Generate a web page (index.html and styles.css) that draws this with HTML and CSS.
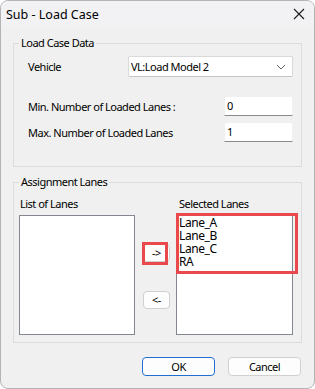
FILE: index.html
```html
<!DOCTYPE html>
<html lang="en">
<head>
  <meta charset="UTF-8">
  <meta name="viewport" content="width=device-width, initial-scale=1.0">
  <title>Sub - Load Case</title>
  <link rel="stylesheet" href="styles.css">
</head>
<body>
  <div class="window">
    <div class="titlebar">
      <span class="title">Sub - Load Case</span>
      <svg class="close" width="12" height="12" viewBox="0 0 12 12">
        <path d="M1 1 L11 11 M11 1 L1 11" stroke="#1b1b1b" stroke-width="1.1" fill="none"/>
      </svg>
    </div>

    <div class="content">
      <fieldset class="group">
        <legend>Load Case Data</legend>
        <div class="group-body body-data">
          <div class="row row-vehicle">
            <label>Vehicle</label>
            <div class="select">
              <span>VL:Load Model 2</span>
              <svg width="10" height="6" viewBox="0 0 10 6">
                <path d="M1 1 L5 5 L9 1" stroke="#5f5f5f" stroke-width="1" fill="none"/>
              </svg>
            </div>
          </div>
          <div class="row row-min">
            <label>Min. Number of Loaded Lanes :</label>
            <div class="field">0</div>
          </div>
          <div class="row row-max">
            <label>Max. Number of Loaded Lanes</label>
            <div class="field">1</div>
          </div>
        </div>
      </fieldset>

      <fieldset class="group group-lanes">
        <legend>Assignment Lanes</legend>
        <div class="group-body body-lanes">
          <div class="col col-left">
            <div class="caption">List of Lanes</div>
            <div class="listbox"></div>
          </div>
          <div class="mover">
            <button class="btn small">-&gt;</button>
            <button class="btn small">&lt;-</button>
            <span class="mark mark-btn"></span>
          </div>
          <div class="col col-right">
            <div class="caption">Selected Lanes</div>
            <div class="listbox">
              <ul class="items">
                <li>Lane_A</li>
                <li>Lane_B</li>
                <li>Lane_C</li>
                <li>RA</li>
              </ul>
              <span class="mark mark-list"></span>
            </div>
          </div>
        </div>
      </fieldset>

      <div class="actions">
        <button class="btn wide ok">OK</button>
        <button class="btn wide">Cancel</button>
      </div>
    </div>
  </div>
</body>
</html>
```

FILE: styles.css
```css
body {
  margin: 0;
  background: #ffffff;
  font-family: "Noto Sans", "Open Sans", sans-serif;
  font-size: 11px;
  letter-spacing: -0.5px;
  color: #000;
}
.window {
  width: 315px;
  height: 389px;
  box-sizing: border-box;
  border: 1px solid #b4b4b4;
  border-radius: 8px;
  overflow: hidden;
  background: #f0f0f0;
  display: flex;
  flex-direction: column;
}
.titlebar {
  height: 26px;
  background: #f2f1f4;
  display: flex;
  align-items: center;
  justify-content: space-between;
  padding: 0 9px 0 5px;
  font-size: 12.5px;
  letter-spacing: 0;
}
.close {
  display: block;
}
.content {
  padding: 0 12px;
}
.group {
  margin: 8px 0 0 0;
  padding: 0;
  border: 1px solid #dcdcdc;
  min-inline-size: 0;
}
.group legend {
  margin-left: 5px;
  padding: 0 2px;
  height: 16px;
  line-height: 16px;
}
.body-data {
  padding: 5px 8px 24px 14px;
}
.row {
  display: flex;
  align-items: center;
  justify-content: space-between;
}
.row-min {
  margin-top: 19px;
}
.row-max {
  margin-top: 6px;
}
.select {
  width: 165px;
  height: 21px;
  box-sizing: border-box;
  background: #fff;
  border: 1px solid #d9d9d9;
  border-bottom-color: #c4c4c4;
  border-radius: 2px;
  display: flex;
  align-items: center;
  justify-content: space-between;
  padding: 0 6px 0 2px;
}
.field {
  width: 69px;
  height: 20px;
  box-sizing: border-box;
  background: #fff;
  border: 1px solid #f0f0f0;
  border-bottom: 1px solid #8a8a8a;
  padding-left: 2px;
  line-height: 18px;
}
.group-lanes {
  margin-top: 7px;
}
.body-lanes {
  display: flex;
  padding: 6px 8px 7px 5px;
}
.caption {
  height: 16px;
  line-height: 16px;
  margin-bottom: 3px;
}
.col-left .caption {
  padding-left: 1px;
}
.col-right .caption {
  padding-left: 3px;
}
.listbox {
  position: relative;
  width: 117px;
  height: 120px;
  box-sizing: border-box;
  background: #fff;
  border: 1px solid #828790;
}
.col-left .listbox {
  width: 116px;
}
.items {
  list-style: none;
  margin: 0;
  padding: 0 0 0 2px;
  font-size: 12px;
  letter-spacing: -0.4px;
  line-height: 13px;
}
.mover {
  position: relative;
  margin: 19px 6px 0 8px;
  display: flex;
  flex-direction: column;
  gap: 29px;
  padding-top: 29px;
}
.btn {
  font-family: inherit;
  font-size: 11px;
  letter-spacing: -0.5px;
  background: #fdfdfd;
  border: 1px solid #d0d0d0;
  border-radius: 4px;
  color: #000;
  padding: 0;
}
.small {
  width: 27px;
  height: 18px;
  line-height: 14px;
}
.mark {
  position: absolute;
  box-sizing: border-box;
  border: 3px solid #e9484c;
}
.mark-btn {
  left: -1px;
  top: 27px;
  width: 26px;
  height: 23px;
}
.mark-list {
  left: -1px;
  top: -3px;
  width: 122px;
  height: 61px;
}
.actions {
  display: flex;
  justify-content: flex-end;
  gap: 13px;
  margin-top: 14px;
  padding-right: 1px;
}
.wide {
  width: 73px;
  height: 19px;
}
.ok {
  border-color: #1f6fd0;
}
```
